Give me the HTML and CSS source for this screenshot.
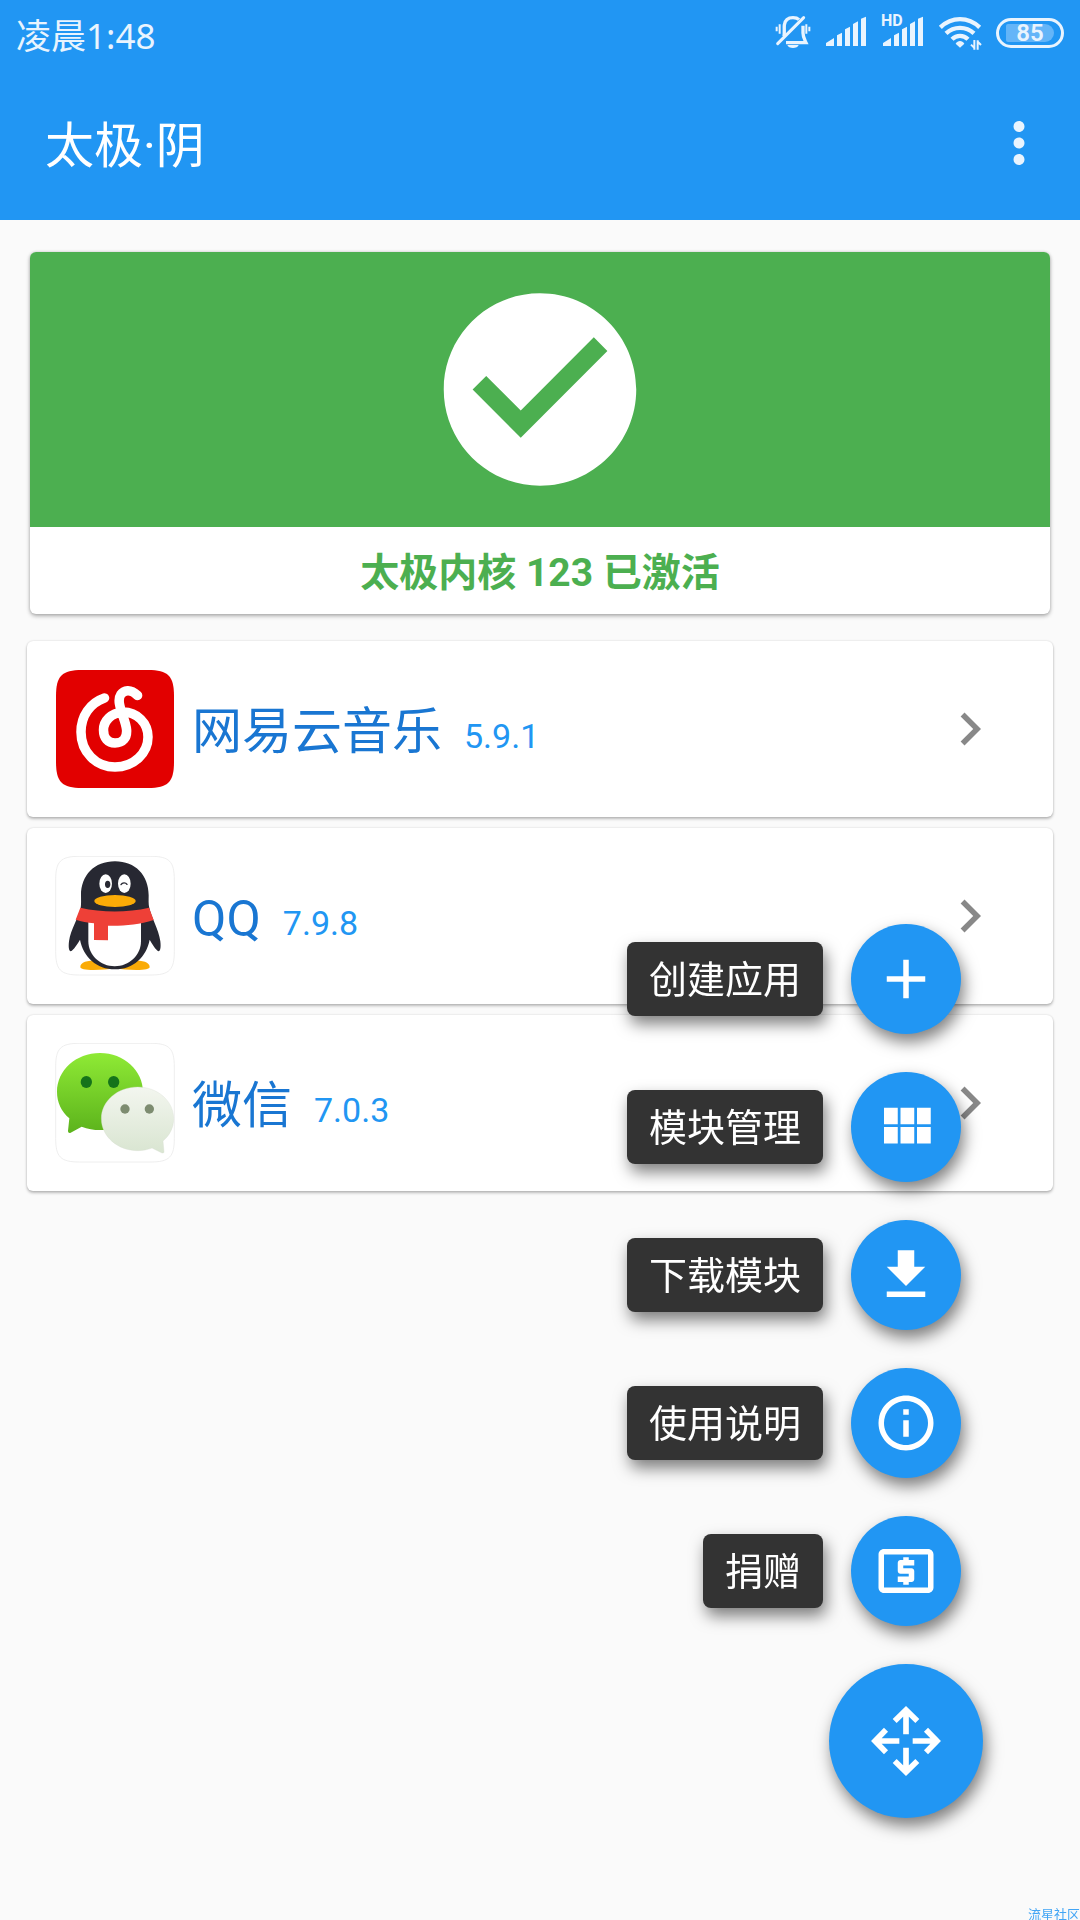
FILE: index.html
```
<!DOCTYPE html>
<html lang="zh-CN">
<head>
    <meta charset="UTF-8">
    <meta name="viewport" content="width=device-width, initial-scale=1.0">
    <title>太极·阴</title>
    <link rel="stylesheet" href="styles.css">
</head>
<body>

<header class="header">
    <!-- Status bar -->
    <div class="status-bar">
        <span class="time">凌晨1:48</span>
        <div class="status-icons">
            <svg width="36" height="36" viewBox="45 48 108 108" fill="none" stroke="currentColor">
                <path d="M72 112c2-10 0-24 1-34 2-14 12-22 26-22 8 0 14 2 18 6" stroke-width="10"/>
                <path d="M129 80v22c0 12 5 20 9 29H78" stroke-width="10"/>
                <path d="M53 134L131 56" stroke-width="9" stroke-linecap="round"/>
                <path d="M50 83v14M59 76v28M139 76v28M148 83v14" stroke-width="6"/>
                <path d="M82 138h34c-3 12-31 12-34 0z" fill="currentColor" stroke="none"/>
            </svg>
            <svg width="42" height="36" viewBox="195 48 126 108" fill="currentColor">
                <path d="M198 141v-9l24-15v24zM231 141v-32l15-8v40zM255 141V91l15-8v58zM279 141V75l15-8v74zM303 141V59l15-6v88z"/>
            </svg>
            <div class="signal-hd">
                <span class="hd">HD</span>
                <svg width="43" height="36" viewBox="360 48 129 108" fill="currentColor">
                    <path d="M366 141v-9l24-15v24zM399 141v-32l15-8v40zM423 141V91l15-8v58zM447 141V75l15-8v74zM471 141V59l15-6v88z"/>
                </svg>
            </div>
            <svg width="44" height="36" viewBox="531 48 132 108" fill="none" stroke="currentColor" stroke-width="13">
                <path d="M538 85c34-33 84-33 118 0M555 103c24-22 60-22 84 0M573 121c14-14 34-14 48 0"/>
                <path d="M584 134c6-11 20-11 26 0l-13 12z" fill="currentColor" stroke="none"/>
                <path d="M640 123v29M630 137l9 9M650 152v-28M660 138l-9-9" stroke-width="6"/>
            </svg>
            <span class="battery"><span class="battery-level">85</span></span>
        </div>
    </div>

    <!-- App bar -->
    <div class="app-bar">
        <h1>太极·阴</h1>
        <button class="more" aria-label="更多">
            <svg width="66" height="66" viewBox="0 0 24 24" fill="currentColor">
                <path d="M12 8c1.1 0 2-.9 2-2s-.9-2-2-2-2 .9-2 2 .9 2 2 2zm0 2c-1.1 0-2 .9-2 2s.9 2 2 2 2-.9 2-2-.9-2-2-2zm0 6c-1.1 0-2 .9-2 2s.9 2 2 2 2-.9 2-2-.9-2-2-2z"/>
            </svg>
        </button>
    </div>
</header>

<main>
    <section class="status-card">
        <div class="status-banner">
            <svg width="232" height="231" viewBox="0 0 24 24" fill="currentColor">
                <path d="M12 2C6.480 2 2 6.480 2 12s4.480 10 10 10 10-4.480 10-10S17.520 2 12 2zm-2 15l-5-5 1.410-1.410L10 14.170l7.590-7.590L19 8l-9 9z"/>
            </svg>
        </div>
        <p class="status-text">太极内核 123 已激活</p>
    </section>

    <!-- App list -->
    <nav class="app-list">
        <a class="app" href="#">
            <svg class="app-icon" viewBox="-1 -1 120 120">
                <path d="M0 26C0 6 6 0 26 0h66c20 0 26 6 26 26v66c0 20-6 26-26 26H26C6 118 0 112 0 92z" fill="#e20000"/>
                <path d="M48.500 28C34 33 25 46 25 62C25 82 40 97 59 97C78 97 92 83 92 67C92 53 81 42 67 42C55 43 47.500 51 47.500 60C47.500 68 52 73 59 73C67 73 71 68 70.600 60C70 52 65 43 63.500 34C62 26 66 21 71.600 20.700C75 20.500 78 22 81.600 25.500" fill="none" stroke="#fff" stroke-width="9.500" stroke-linecap="round"/>
            </svg>
            <span class="app-name">网易云音乐</span>
            <span class="app-version">5.9.1</span>
            <svg class="chevron" viewBox="0 0 24 24"><path d="M10 6L8.590 7.410 13.170 12l-4.580 4.590L10 18l6-6z"/></svg>
        </a>
        <a class="app" href="#">
            <svg class="app-icon" viewBox="45 48 360 360">
                <path d="M47 120c0-56 15-71 71-71h214c56 0 71 15 71 71v214c0 56-15 71-71 71H118c-56 0-71-15-71-71z" fill="#fff" stroke="#e6e6e6" stroke-width="2"/>
                <path d="M121 381c0-14 20-20 52-20h104c32 0 52 6 52 20 0 6-14 9-40 9-24 0-44-1-64-5-20 4-40 5-64 5-26 0-40-3-40-9z" fill="#faab07"/>
                <path d="M225 64c-62 0-102 42-102 102 0 14 1 26-1 38-6 28-30 64-35 100-3 24 2 36 10 27 8-8 16-20 23-32 10 52 50 89 105 89s94-37 104-89c7 12 14 24 22 32 8 9 13-3 10-27-5-36-27-72-33-100-3-12-2-24-2-38 0-60-40-102-101-102z" fill="#272832"/>
                <path d="M145 240v64c0 42 36 75 79 75s79-33 79-75v-64z" fill="#fff"/>
                <path d="M121 203c66 15 140 15 206 0l14 37c-44 14-90 18-137 17v44l-42-1v-50c-20-2-38-5-55-11z" fill="#ee4037"/>
                <ellipse cx="197" cy="131" rx="19" ry="28" fill="#fff"/>
                <ellipse cx="253" cy="131" rx="19" ry="28" fill="#fff"/>
                <ellipse cx="203" cy="133" rx="8" ry="11" fill="#272832"/>
                <path d="M243 134c4-7 14-7 18-1" fill="none" stroke="#272832" stroke-width="4" stroke-linecap="round"/>
                <ellipse cx="225" cy="183" rx="62" ry="18" fill="#faab07"/>
            </svg>
            <span class="app-name">QQ</span>
            <span class="app-version">7.9.8</span>
            <svg class="chevron" viewBox="0 0 24 24"><path d="M10 6L8.590 7.410 13.170 12l-4.580 4.590L10 18l6-6z"/></svg>
        </a>
        <a class="app" href="#">
            <svg class="app-icon" viewBox="45 39 360 360">
                <defs>
                    <linearGradient id="bubble-green" x1="0" y1="0" x2="0" y2="1">
                        <stop offset="0" stop-color="#8fea35"/>
                        <stop offset="1" stop-color="#5cb31c"/>
                    </linearGradient>
                    <linearGradient id="bubble-white" x1="0" y1="0" x2="0" y2="1">
                        <stop offset="0" stop-color="#f3f6ef"/>
                        <stop offset="1" stop-color="#d9e5d1"/>
                    </linearGradient>
                </defs>
                <path d="M47 111c0-56 15-71 71-71h214c56 0 71 15 71 71v214c0 56-15 71-71 71H118c-56 0-71-15-71-71z" fill="#fff" stroke="#e6e6e6" stroke-width="2"/>
                <path d="M180 69c-72 0-129 52-129 116 0 32 13 59 37 80l-4 38c0 5 4 7 8 5l33-18c18 7 36 10 55 10 72 0 129-52 129-115S252 69 180 69z" fill="url(#bubble-green)"/>
                <ellipse cx="139" cy="156" rx="17" ry="18" fill="#15731a"/>
                <ellipse cx="221" cy="156" rx="17" ry="18" fill="#15731a"/>
                <path d="M293 171c-60 0-109 42-109 95s49 96 109 96c16 0 30-3 43-8l30 15c4 1 6-1 6-4l-3-32c20-17 32-40 32-67 0-53-48-95-108-95z" fill="url(#bubble-white)" stroke="#d5dccf"/>
                <circle cx="255" cy="237" r="14" fill="#7d8c70"/>
                <circle cx="328" cy="237" r="14" fill="#7d8c70"/>
            </svg>
            <span class="app-name">微信</span>
            <span class="app-version">7.0.3</span>
            <svg class="chevron" viewBox="0 0 24 24"><path d="M10 6L8.590 7.410 13.170 12l-4.580 4.590L10 18l6-6z"/></svg>
        </a>
    </nav>
</main>

<!-- Floating menu -->
<div class="fab-menu">
    <div class="fab-item">
        <label class="fab-label" for="fab-create">创建应用</label>
        <button class="fab fab-mini" id="fab-create">
            <svg viewBox="0 0 24 24"><path d="M19 13h-6v6h-2v-6H5v-2h6V5h2v6h6v2z"/></svg>
        </button>
    </div>
    <div class="fab-item">
        <label class="fab-label" for="fab-modules">模块管理</label>
        <button class="fab fab-mini" id="fab-modules">
            <svg viewBox="0 0 24 24"><path d="M4 11h5V5H4v6zm0 7h5v-6H4v6zm6 0h5v-6h-5v6zm6 0h5v-6h-5v6zm-6-7h5V5h-5v6zm6-6v6h5V5h-5z"/></svg>
        </button>
    </div>
    <div class="fab-item">
        <label class="fab-label" for="fab-download">下载模块</label>
        <button class="fab fab-mini" id="fab-download">
            <svg viewBox="0 0 24 24"><path d="M19 9h-4V3H9v6H5l7 7 7-7zM5 18v2h14v-2H5z"/></svg>
        </button>
    </div>
    <div class="fab-item">
        <label class="fab-label" for="fab-help">使用说明</label>
        <button class="fab fab-mini" id="fab-help">
            <svg viewBox="0 0 24 24"><path d="M11 17h2v-6h-2v6zm1-15C6.480 2 2 6.480 2 12s4.480 10 10 10 10-4.480 10-10S17.520 2 12 2zm0 18c-4.410 0-8-3.590-8-8s3.590-8 8-8 8 3.590 8 8-3.590 8-8 8zM11 9h2V7h-2v2z"/></svg>
        </button>
    </div>
    <div class="fab-item">
        <label class="fab-label" for="fab-donate">捐赠</label>
        <button class="fab fab-mini" id="fab-donate">
            <svg viewBox="0 0 24 24"><path d="M11 17h2v-1h1c.55 0 1-.45 1-1v-3c0-.55-.45-1-1-1h-3v-1h4V8h-2V7h-2v1h-1c-.55 0-1 .45-1 1v3c0 .55.45 1 1 1h3v1H9v2h2v1zm9-13H4c-1.110 0-1.990.89-1.990 2L2 18c0 1.110.89 2 2 2h16c1.110 0 2-.89 2-2V6c0-1.110-.89-2-2-2zm0 14H4V6h16v12z"/></svg>
        </button>
    </div>
    <button class="fab fab-main" aria-label="菜单">
        <svg viewBox="-105 -105 210 210">
            <g id="arrow" fill="none" stroke="#fff" stroke-width="17">
                <path d="M0 -20V-90M-34 -60L0 -93L34 -60"/>
            </g>
            <use href="#arrow" transform="rotate(90)"/>
            <use href="#arrow" transform="rotate(180)"/>
            <use href="#arrow" transform="rotate(270)"/>
        </svg>
    </button>
</div>

<span class="watermark">流星社区</span>

</body>
</html>
```

FILE: styles.css
```
* {
    box-sizing: border-box;
}
body {
    margin: 0;
    min-height: 100vh;
    background-color: #fafafa;
    font-family: Roboto, "Noto Sans CJK SC", sans-serif;
}
button {
    padding: 0;
    border: none;
    background: none;
    cursor: pointer;
}
svg {
    display: block;
}

/* Header */
.header {
    background-color: #2196f3;
    color: white;
}
.status-bar {
    display: flex;
    justify-content: space-between;
    align-items: center;
    height: 66px;
    padding: 0 16px;
    color: #e9f4fe;
}
.time {
    font-family: "Noto Sans", "Noto Sans CJK SC", sans-serif;
    font-size: 35px;
}
.status-icons {
    display: flex;
    align-items: center;
    gap: 14px;
}
.signal-hd {
    position: relative;
}
.hd {
    position: absolute;
    top: -2px;
    left: 0;
    font-size: 16px;
    line-height: 16px;
    font-weight: 700;
}
.battery {
    display: flex;
    align-items: center;
    justify-content: center;
    width: 68px;
    height: 30px;
    border: 3px solid #e9f4fe;
    border-radius: 15px;
}
.battery-level {
    width: 48px;
    border-radius: 2px 9px 9px 2px;
    background-color: #64b5f8;
    font-size: 24px;
    line-height: 18px;
    font-weight: 600;
    text-align: center;
}
.app-bar {
    display: flex;
    justify-content: space-between;
    align-items: center;
    height: 154px;
    padding: 0 28px 0 45px;
}
h1 {
    margin: 0;
    padding-bottom: 4px;
    font-size: 49px;
    font-weight: 400;
}
.more {
    color: #e9f4fe;
}

/* Status card */
main {
    padding: 32px 27px;
}
.status-card {
    margin: 0 3px 27px;
    border-radius: 6px;
    background-color: white;
    box-shadow: 0 2px 4px rgba(0, 0, 0, 0.3), 0 0 3px rgba(0, 0, 0, 0.15);
    overflow: hidden;
}
.status-banner {
    display: flex;
    justify-content: center;
    padding: 22px 0;
    background-color: #4caf50;
    color: white;
}
.status-text {
    margin: 0;
    padding-top: 5px;
    color: #4caf50;
    font-size: 39px;
    line-height: 82px;
    font-weight: 700;
    text-align: center;
}

/* App list */
.app-list {
    display: flex;
    flex-direction: column;
    gap: 11px;
}
.app {
    display: flex;
    align-items: center;
    height: 176px;
    padding: 0 50px 0 28px;
    border-radius: 6px;
    background-color: white;
    box-shadow: 0 2px 3px rgba(0, 0, 0, 0.25), 0 0 2px rgba(0, 0, 0, 0.15);
    line-height: 60px;
    text-decoration: none;
}
.app-icon {
    width: 120px;
    height: 120px;
    margin-right: 17px;
}
.app-name {
    padding-top: 5px;
    color: #1976d2;
    font-size: 50px;
}
.app-version {
    margin-left: 22px;
    padding-top: 14px;
    color: #2196f3;
    font-size: 34px;
}
.chevron {
    width: 66px;
    height: 66px;
    margin-left: auto;
    fill: #888888;
}

/* Floating menu */
.fab-menu {
    position: fixed;
    right: 97px;
    bottom: 102px;
    display: flex;
    flex-direction: column;
    align-items: flex-end;
    gap: 38px;
}
.fab-item {
    display: flex;
    align-items: center;
    gap: 28px;
    padding-right: 22px;
}
.fab-label {
    padding: 2px 22px 0;
    border-radius: 8px;
    background-color: #333333;
    box-shadow: 3px 8px 16px rgba(0, 0, 0, 0.5);
    color: white;
    font-size: 38px;
    line-height: 72px;
}
.fab {
    display: flex;
    align-items: center;
    justify-content: center;
    border-radius: 50%;
    background-color: #2196f3;
    box-shadow: 3px 8px 16px rgba(0, 0, 0, 0.5);
}
.fab svg {
    fill: white;
}
.fab-mini {
    width: 110px;
    height: 110px;
}
.fab-mini svg {
    width: 66px;
    height: 66px;
}
.fab-main {
    width: 154px;
    height: 154px;
}
.fab-main svg {
    width: 70px;
    height: 70px;
}

.watermark {
    position: fixed;
    right: 0;
    bottom: 0;
    color: #42a5f5;
    font-size: 13px;
    line-height: 11px;
}
```
